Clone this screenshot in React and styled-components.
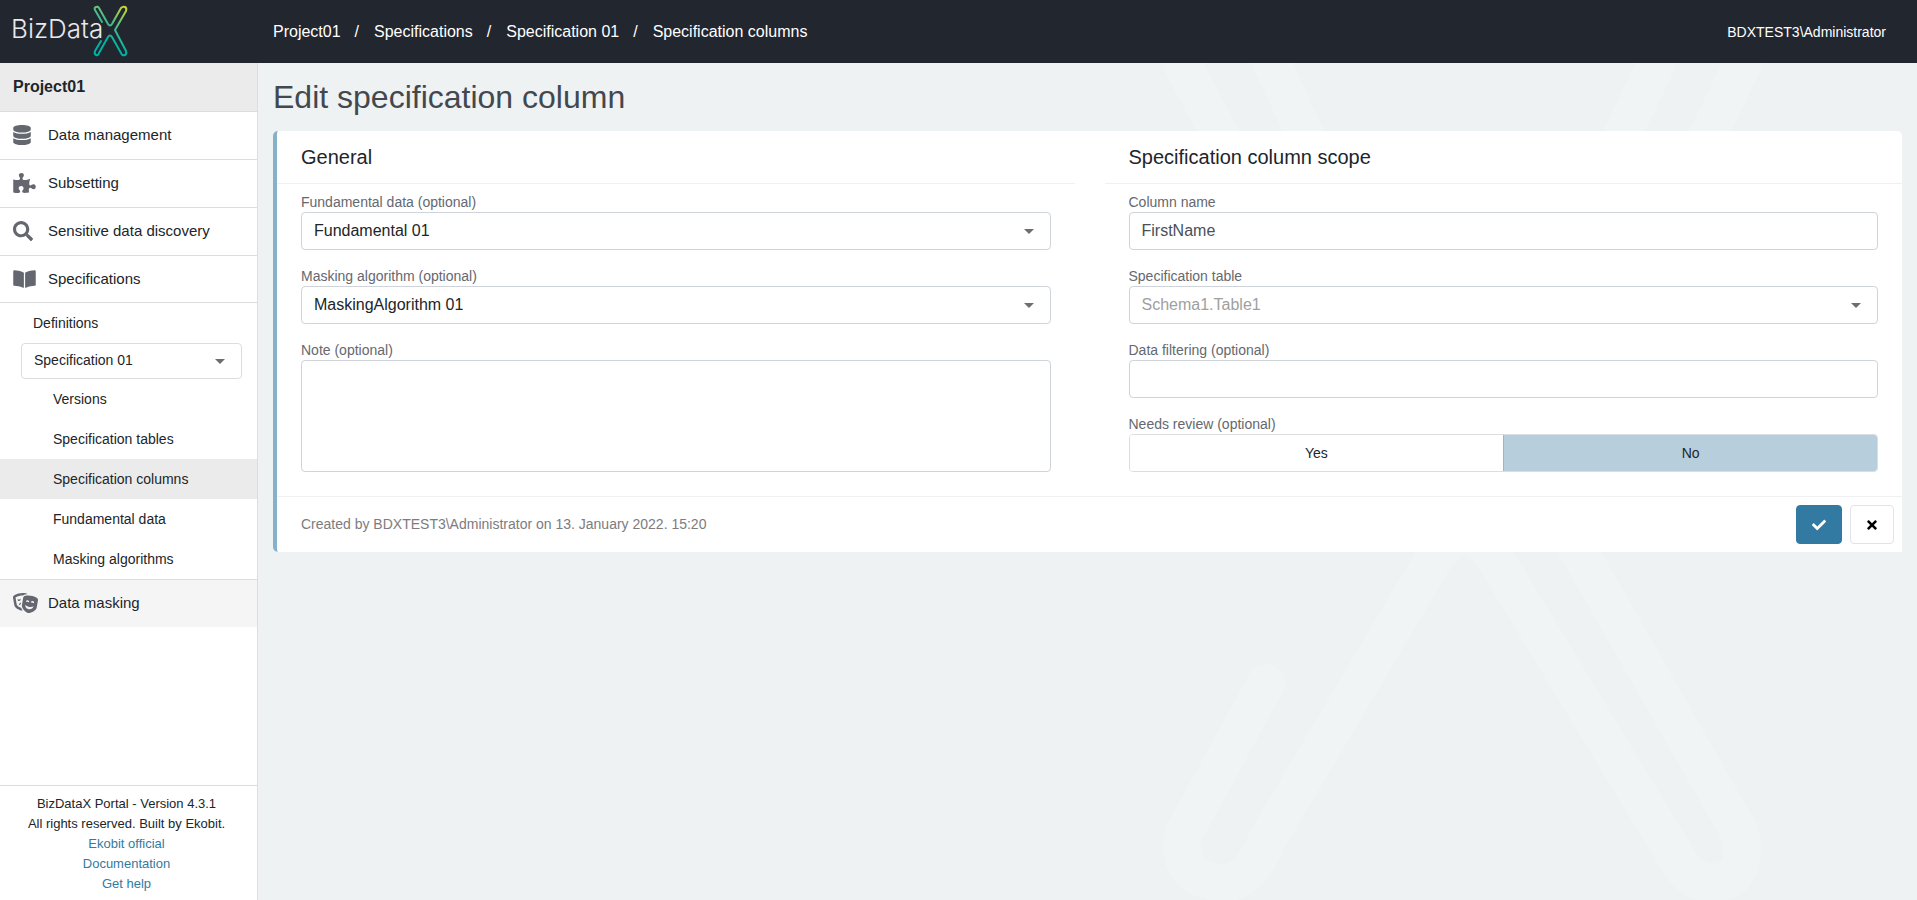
import { useState } from "react";
import styled, { createGlobalStyle } from "styled-components";
import {
  FaBookOpen,
  FaCheck,
  FaDatabase,
  FaPuzzlePiece,
  FaSearch,
  FaTheaterMasks,
  FaTimes,
} from "react-icons/fa";

const GlobalStyle = createGlobalStyle`
  *, *::before, *::after {
    box-sizing: border-box;
  }
  body {
    margin: 0;
    background: #eef2f3;
    color: #212529;
    font-family: "Liberation Sans", Arial, sans-serif;
    font-size: 14px;
    line-height: 20px;
  }
  a {
    color: inherit;
    text-decoration: none;
  }
  button, input, select, textarea {
    font-family: inherit;
    margin: 0;
  }
`;

const Page = styled.div`
  display: flex;
  flex-direction: column;
  min-height: 100vh;
`;

const Header = styled.header`
  display: flex;
  align-items: center;
  height: 63px;
  padding-right: 31px;
  background: #22262f;
  color: #fff;
`;

const LogoLink = styled.a`
  width: 273px;
  height: 63px;
  flex-shrink: 0;
`;

const LogoText = styled.text`
  font-family: Inter, sans-serif;
  font-size: 26px;
  font-weight: 300;
`;

const Breadcrumbs = styled.nav`
  display: flex;
  gap: 14px;
  flex: 1;
  font-size: 16px;
`;

const Separator = styled.span`
  padding-right: 1px;
`;

const UserName = styled.span`
  font-size: 14px;
`;

const Body = styled.div`
  display: flex;
  flex: 1;
`;

const Sidebar = styled.aside`
  display: flex;
  flex-direction: column;
  width: 258px;
  flex-shrink: 0;
  background: #fff;
  border-right: 1px solid #dcdddf;
`;

const ProjectLink = styled.a`
  height: 49px;
  padding: 14px 13px;
  background: #ebebeb;
  border-bottom: 1px solid #dcdddf;
  font-size: 16px;
  font-weight: bold;
`;

const MenuLink = styled.a`
  display: flex;
  align-items: center;
  height: ${({ $compact }) => ($compact ? "47px" : "48px")};
  padding: ${({ $compact }) => ($compact ? "0 13px" : "0 13px 2px")};
  background: ${({ $muted }) => ($muted ? "#f5f5f5" : "#fff")};
  border-bottom: 1px solid ${({ $muted }) => ($muted ? "#f5f5f5" : "#dcdddf")};
  font-size: 15px;
`;

const MenuIcon = styled.span`
  display: flex;
  width: 35px;
  color: #64676f;

  svg {
    width: ${({ $width }) => $width}px;
    height: 20px;
  }
`;

const SubMenu = styled.div`
  display: flex;
  flex-direction: column;
  border-bottom: 1px solid #dcdddf;
`;

const SubLink = styled.a`
  height: 40px;
  padding: 10px 16px 10px ${({ $top }) => ($top ? "33px" : "53px")};
  background: ${({ $active }) => ($active ? "#ebebeb" : "transparent")};
`;

const SelectBox = styled.div`
  display: grid;
  align-items: center;
  margin: ${({ $small }) => ($small ? "0 15px 0 21px" : "0")};

  > * {
    grid-area: 1 / 1;
  }
  > svg {
    justify-self: end;
    margin-right: 17px;
    pointer-events: none;
  }
`;

const Select = styled.select`
  appearance: none;
  width: 100%;
  height: ${({ $small }) => ($small ? "36px" : "38px")};
  padding: 0 36px 2px 12px;
  background: #fff;
  border: 1px solid ${({ $small }) => ($small ? "#dcdddf" : "#ced4da")};
  border-radius: 4px;
  color: #212529;
  font-size: ${({ $small }) => ($small ? "14px" : "16px")};

  &:disabled {
    color: #a0a0a0;
    opacity: 1;
  }
`;

const SidebarFooter = styled.footer`
  display: flex;
  flex-direction: column;
  align-items: center;
  margin-top: auto;
  padding: 8px 4px 6px 0;
  border-top: 1px solid #dcdddf;
  font-size: 13px;
`;

const FooterLink = styled.a`
  color: #327aa2;
`;

const Main = styled.main`
  position: relative;
  flex: 1;
  min-width: 0;
  padding: 14px 15px 16px;
  overflow: hidden;
`;

const Backdrop = styled.svg`
  position: absolute;
  top: 0;
  right: 0;
  fill: none;
  stroke: #f0f4f5;
`;

const Title = styled.h1`
  margin: 0 0 14px;
  color: #43484e;
  font-size: 32px;
  font-weight: normal;
  line-height: 40px;
`;

const Card = styled.form`
  position: relative;
  background: #fff;
  border-left: 4px solid #87b1c8;
  border-radius: 5px 5px 0 5px;
`;

const Columns = styled.div`
  display: grid;
  grid-template-columns: 1fr 1fr;
  gap: 30px;
`;

const SectionTitle = styled.h2`
  margin: 0;
  padding: 14px 24px;
  border-bottom: 1px solid #eef0f1;
  font-size: 20px;
  font-weight: normal;
  line-height: 24px;
`;

const Fields = styled.div`
  display: flex;
  flex-direction: column;
  gap: 16px;
  padding: 8px 24px 24px;
`;

const Label = styled.label`
  display: block;
  color: #65686f;
`;

const Input = styled.input`
  display: block;
  width: 100%;
  height: 38px;
  padding: 0 12px;
  background: #fff;
  border: 1px solid #ced4da;
  border-radius: 4px;
  color: #495057;
  font-size: 16px;
`;

const TextArea = styled.textarea`
  display: block;
  width: 100%;
  height: 112px;
  padding: 8px 12px;
  border: 1px solid #ced4da;
  border-radius: 4px;
  font-size: 16px;
  resize: none;
`;

const Toggle = styled.div`
  display: grid;
  grid-template-columns: 1fr 1fr;
  height: 38px;
  border: 1px solid #dcdddf;
  border-radius: 4px;
  overflow: hidden;
`;

const ToggleButton = styled.button`
  padding: 0;
  border: 0;
  border-left: ${({ $divided }) => ($divided ? "1px solid #9fb6c2" : "0")};
  background: ${({ $selected }) => ($selected ? "#b7cfdc" : "#fff")};
  color: #212529;
  font-size: 14px;
`;

const CardFooter = styled.div`
  display: flex;
  align-items: center;
  gap: 8px;
  padding: 8px 8px 8px 24px;
  border-top: 1px solid #eef0f1;
`;

const Created = styled.span`
  flex: 1;
  padding-bottom: 2px;
  color: #7c7c7e;
`;

const ActionButton = styled.button`
  display: flex;
  align-items: center;
  justify-content: center;
  width: ${({ $primary }) => ($primary ? "46px" : "44px")};
  height: 39px;
  background: ${({ $primary }) => ($primary ? "#327aa2" : "#fff")};
  border: 1px solid ${({ $primary }) => ($primary ? "#327aa2" : "#e3e3e5")};
  border-radius: 4px;
  color: ${({ $primary }) => ($primary ? "#fff" : "#000")};
  font-size: 14px;
`;

const Logo = () => (
  <svg width="135" height="63" role="img" aria-label="BizDataX">
    <defs>
      <linearGradient id="arm" gradientUnits="userSpaceOnUse" x1="126" y1="7" x2="104" y2="38">
        <stop offset="0" stopColor="#c9d92b" />
        <stop offset="0.55" stopColor="#4bbd8c" />
        <stop offset="1" stopColor="#00b1a5" />
      </linearGradient>
    </defs>
    <LogoText x="11" y="38" fill="#e8e9ea">BizData</LogoText>
    <g fill="none" stroke="url(#arm)" strokeWidth="2" strokeLinecap="round" strokeLinejoin="round">
      <path d="M102 22 L95 10 Q94 8 96 7 Q98 6 99 8 L108 24 Q110 27 112 24 L121 8 Q123 6 125 7 Q127 8 126 11 L115 30 L126 51 Q127 54 125 55 Q122 56 121 53 L112 37 Q110 34 108 37 L99 53 Q98 56 96 55 Q94 54 95 51 L101 41" />
    </g>
  </svg>
);

const Caret = () => (
  <svg width="10" height="5" aria-hidden="true">
    <path d="M0 0H10L5 5Z" fill="#6c6e70" />
  </svg>
);

const menu = [
  { label: "Data management", icon: <FaDatabase />, iconWidth: 18 },
  { label: "Subsetting", icon: <FaPuzzlePiece />, iconWidth: 23 },
  { label: "Sensitive data discovery", icon: <FaSearch />, iconWidth: 20 },
  { label: "Specifications", icon: <FaBookOpen />, iconWidth: 23, open: true },
];

const subMenu = [
  "Versions",
  "Specification tables",
  "Specification columns",
  "Fundamental data",
  "Masking algorithms",
];

const crumbs = ["Project01", "Specifications", "Specification 01"];

const SelectField = ({ id, label, value, disabled }) => (
  <div>
    <Label htmlFor={id}>{label}</Label>
    <SelectBox>
      <Select id={id} disabled={disabled}>
        <option>{value}</option>
      </Select>
      <Caret />
    </SelectBox>
  </div>
);

const App = () => {
  const [columnName, setColumnName] = useState("FirstName");
  const [needsReview, setNeedsReview] = useState(false);

  return (
    <Page>
      <GlobalStyle />
      <Header>
        <LogoLink href="#">
          <Logo />
        </LogoLink>
        <Breadcrumbs>
          {crumbs.map((crumb) => [
            <a href="#" key={crumb}>
              {crumb}
            </a>,
            <Separator key={`${crumb}-separator`}>/</Separator>,
          ])}
          <span>Specification columns</span>
        </Breadcrumbs>
        <UserName>BDXTEST3\Administrator</UserName>
      </Header>
      <Body>
        <Sidebar>
          <ProjectLink href="#">Project01</ProjectLink>
          {menu.map(({ label, icon, iconWidth, open }) => (
            <MenuLink href="#" key={label} $compact={open}>
              <MenuIcon $width={iconWidth}>{icon}</MenuIcon>
              {label}
            </MenuLink>
          ))}
          <SubMenu>
            <SubLink href="#" $top>
              Definitions
            </SubLink>
            <SelectBox $small>
              <Select $small aria-label="Specification">
                <option>Specification 01</option>
              </Select>
              <Caret />
            </SelectBox>
            {subMenu.map((label) => (
              <SubLink href="#" key={label} $active={label === "Specification columns"}>
                {label}
              </SubLink>
            ))}
          </SubMenu>
          <MenuLink href="#" $muted $compact>
            <MenuIcon $width={25}>
              <FaTheaterMasks />
            </MenuIcon>
            Data masking
          </MenuLink>
          <SidebarFooter>
            <span>BizDataX Portal - Version 4.3.1</span>
            <span>All rights reserved. Built by Ekobit.</span>
            <FooterLink href="#">Ekobit official</FooterLink>
            <FooterLink href="#">Documentation</FooterLink>
            <FooterLink href="#">Get help</FooterLink>
          </SidebarFooter>
        </Sidebar>
        <Main>
          <Backdrop width="817" height="837" strokeWidth="38" strokeLinecap="round" aria-hidden="true">
            <path d="M82 0L260 340Q366 480 450 220L557 0M172 0L310 300M643 0L440 420L640 770Q650 820 610 820Q590 818 578 797L396 497Q366 450 333 497L167 777Q150 820 122 820Q74 815 84 770L166 620" />
          </Backdrop>
          <Title>Edit specification column</Title>
          <Card onSubmit={(e) => e.preventDefault()}>
            <Columns>
              <section>
                <SectionTitle>General</SectionTitle>
                <Fields>
                  <SelectField
                    id="fundamental"
                    label="Fundamental data (optional)"
                    value="Fundamental 01"
                  />
                  <SelectField
                    id="algorithm"
                    label="Masking algorithm (optional)"
                    value="MaskingAlgorithm 01"
                  />
                  <div>
                    <Label htmlFor="note">Note (optional)</Label>
                    <TextArea id="note" />
                  </div>
                </Fields>
              </section>
              <section>
                <SectionTitle>Specification column scope</SectionTitle>
                <Fields>
                  <div>
                    <Label htmlFor="columnName">Column name</Label>
                    <Input
                      id="columnName"
                      value={columnName}
                      onChange={(e) => setColumnName(e.target.value)}
                    />
                  </div>
                  <SelectField
                    id="table"
                    label="Specification table"
                    value="Schema1.Table1"
                    disabled
                  />
                  <div>
                    <Label htmlFor="filtering">Data filtering (optional)</Label>
                    <Input id="filtering" />
                  </div>
                  <div>
                    <Label as="span" id="review">
                      Needs review (optional)
                    </Label>
                    <Toggle role="group" aria-labelledby="review">
                      <ToggleButton
                        type="button"
                        $selected={needsReview}
                        onClick={() => setNeedsReview(true)}
                      >
                        Yes
                      </ToggleButton>
                      <ToggleButton
                        type="button"
                        $divided
                        $selected={!needsReview}
                        onClick={() => setNeedsReview(false)}
                      >
                        No
                      </ToggleButton>
                    </Toggle>
                  </div>
                </Fields>
              </section>
            </Columns>
            <CardFooter>
              <Created>Created by BDXTEST3\Administrator on 13. January 2022. 15:20</Created>
              <ActionButton $primary aria-label="Save">
                <FaCheck />
              </ActionButton>
              <ActionButton type="button" aria-label="Cancel">
                <FaTimes />
              </ActionButton>
            </CardFooter>
          </Card>
        </Main>
      </Body>
    </Page>
  );
};

export default App;
